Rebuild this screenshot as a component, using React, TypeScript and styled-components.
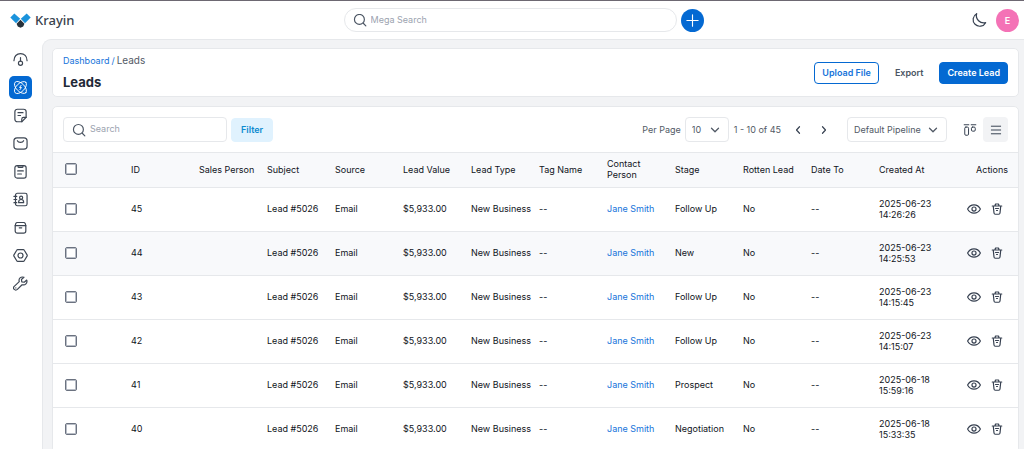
import React from "react";
import styled, { createGlobalStyle } from "styled-components";

const c = {
  blue: "#0469d2",
  link: "#1674da",
  text: "#1f2937",
  muted: "#525a66",
  line: "#e6e8eb",
  bg: "#f2f3f5",
  row: "#f8f9fb",
};

const GlobalStyle = createGlobalStyle`
  *, *::before, *::after { box-sizing: border-box; }
  body {
    margin: 0;
    background: #fff;
    color: ${c.text};
    font: 400 9px/11px Inter, "Liberation Sans", sans-serif;
  }
  button, input, select { font: inherit; color: inherit; margin: 0; }
  button { cursor: pointer; }
  a { color: ${c.link}; text-decoration: none; }
`;

const Page = styled.div`
  display: flex;
  flex-direction: column;
  height: 100vh;
  overflow: hidden;
  border-top: 1px solid #6d6872;
`;

const Header = styled.header`
  display: grid;
  grid-template-columns: 1fr minmax(200px, 360px) 1fr;
  align-items: center;
  flex: none;
  height: 38px;
  padding: 0 5px 0 28px;
`;

const Brand = styled.a`
  display: flex;
  align-items: center;
  gap: 4px;
  margin-left: -18px;
  color: #39434d;
  font: 500 13px/18px "Noto Sans", "Open Sans", sans-serif;
`;

const SearchGroup = styled.div`
  display: flex;
  align-items: center;
  gap: 4px;
`;

const SearchField = styled.label<{ $round?: boolean }>`
  display: flex;
  align-items: center;
  gap: 4px;
  flex: ${(p) => (p.$round ? "1" : "0 0 164px")};
  min-width: 0;
  height: ${(p) => (p.$round ? 24 : 25)}px;
  padding: 0 8px;
  border: 1px solid ${c.line};
  border-radius: ${(p) => (p.$round ? 12 : 4)}px;
  background: #fff;
  color: #4b5563;
`;

const SearchInput = styled.input`
  flex: 1;
  width: 0;
  min-width: 0;
  height: 14px;
  padding: 0 0 2px;
  border: 0;
  outline: 0;
  background: transparent;
  &::placeholder { color: #9ca3af; opacity: 1; }
`;

const RoundButton = styled.button<{ $pink?: boolean }>`
  display: grid;
  place-items: center;
  flex: none;
  width: 23px;
  height: 23px;
  padding: 0;
  border: 0;
  border-radius: 50%;
  background: ${(p) => (p.$pink ? "#f472b6" : c.blue)};
  color: #fff;
  font-weight: 600;
`;

const HeaderTools = styled.div`
  display: flex;
  align-items: center;
  justify-content: flex-end;
  gap: 9px;
`;

const IconButton = styled.button<{ $active?: boolean; $size?: number }>`
  display: grid;
  place-items: center;
  flex: none;
  width: ${(p) => p.$size ?? 16}px;
  height: ${(p) => p.$size ?? 16}px;
  padding: 0;
  border: 0;
  border-radius: 4px;
  background: ${(p) => (p.$active ? "#f2f3f5" : "transparent")};
  color: #374151;
`;

const Body = styled.div`
  display: flex;
  flex: 1;
  min-height: 0;
`;

const Sidebar = styled.nav`
  display: flex;
  flex-direction: column;
  gap: 5px;
  flex: none;
  width: 42px;
  padding: 9px 0 0 9px;
`;

const NavItem = styled.a<{ $active?: boolean }>`
  display: grid;
  place-items: center;
  width: 23px;
  height: 23px;
  border-radius: 5px;
  background: ${(p) => (p.$active ? c.blue : "transparent")};
  color: ${(p) => (p.$active ? "#fff" : "#3d4653")};
`;

const Main = styled.main`
  display: flex;
  flex-direction: column;
  gap: 9px;
  flex: 1;
  min-width: 0;
  padding: 8px 5px 0 9px;
  overflow: hidden;
  border: solid ${c.line};
  border-width: 1px 0 0 1px;
  border-top-left-radius: 9px;
  background: ${c.bg};
`;

const Panel = styled.section`
  flex: none;
  border: 1px solid ${c.line};
  border-radius: 5px;
  background: #fff;
  overflow: hidden;
`;

const TitleBar = styled.div`
  display: flex;
  align-items: center;
  justify-content: space-between;
  height: 47px;
  padding: 0 10px;
`;

const Crumbs = styled.div`
  display: flex;
  align-items: baseline;
  gap: 2px;
  color: ${c.link};
`;

const Current = styled.span`
  color: ${c.muted};
  font-size: 10px;
`;

const Title = styled.h1`
  margin: 8px 0 0;
  font-size: 13px;
  line-height: 16px;
  font-weight: 700;
`;

const Actions = styled.div`
  display: flex;
  align-items: center;
  gap: 8px;
`;

const Button = styled.button<{ $kind: "outline" | "plain" | "solid" | "soft" }>`
  height: ${(p) => (p.$kind === "soft" ? 24 : 22)}px;
  padding: 0 ${(p) => (p.$kind === "soft" ? 9 : 7)}px;
  border: 1px solid ${(p) =>
    ({ outline: c.blue, plain: "transparent", solid: c.blue, soft: "#e0f2fe" })[p.$kind]};
  border-radius: 4px;
  background: ${(p) =>
    ({ outline: "#fff", plain: "transparent", solid: c.blue, soft: "#e0f2fe" })[p.$kind]};
  color: ${(p) =>
    ({ outline: c.link, plain: "#4b5563", solid: "#fff", soft: "#0e8bd0" })[p.$kind]};
  font-weight: 600;
  white-space: nowrap;
`;

const Toolbar = styled.div`
  display: flex;
  align-items: center;
  justify-content: space-between;
  height: 45px;
  padding: 0 10px;
  color: ${c.muted};
`;

const PageControls = styled.div`
  display: flex;
  align-items: center;
  gap: 5px;
`;

const PerPage = styled.label`
  display: flex;
  align-items: center;
  gap: 4px;
`;

const Pager = styled.div`
  display: flex;
  gap: 10px;
  margin: 0 10px 0 4px;
`;

const ViewSwitch = styled.div`
  display: flex;
  align-items: center;
  gap: 1px;
  margin-left: 5px;
`;

const SelectBox = styled.span<{ $width: number }>`
  display: grid;
  align-items: center;
  width: ${(p) => p.$width}px;
  > * { grid-area: 1 / 1; }
  > svg { justify-self: end; margin-right: 8px; pointer-events: none; }
`;

const Select = styled.select`
  appearance: none;
  width: 100%;
  height: 25px;
  padding: 0 20px 0 6px;
  border: 1px solid ${c.line};
  border-radius: 4px;
  background: #fff;
`;

const Table = styled.table`
  width: 100%;
  table-layout: fixed;
  border-collapse: collapse;
  color: #10141b;
`;

const Col = styled.col<{ $width?: number }>`
  width: ${(p) => (p.$width ? `${p.$width}px` : "auto")};
`;

const Row = styled.tr<{ $head?: boolean; $shade?: boolean }>`
  height: ${(p) => (p.$head ? 35 : 44)}px;
  border: solid ${c.line};
  border-width: ${(p) => (p.$head ? "1px 0" : "0 0 1px")};
  background: ${(p) => (p.$head || p.$shade ? c.row : "#fff")};
`;

const cell = `
  padding: 0 6px 2px 0;
  font-weight: 400;
  text-align: left;
  vertical-align: middle;
  &:first-child { padding-left: 12px; }
  &:last-child { padding-right: 10px; text-align: right; }
`;
const Th = styled.th`${cell}`;
const Td = styled.td`${cell}`;

const Check = styled.input`
  appearance: none;
  display: block;
  width: 12px;
  height: 12px;
  border: 1px solid #6b7280;
  border-radius: 2px;
  background: #fff;
  box-shadow: inset 0 0 0 1px #b9bec7;
`;

const RowTools = styled.div`
  display: flex;
  justify-content: flex-end;
  gap: 7px;
  margin-right: 3px;
`;

function Icon({ size = 16, width = 1.7, children }: { size?: number; width?: number; children: React.ReactNode }) {
  return (
    <svg width={size} height={size} viewBox="0 0 24 24" fill="none" stroke="currentColor"
      strokeWidth={width} strokeLinecap="round" strokeLinejoin="round" aria-hidden="true">
      {children}
    </svg>
  );
}

const SearchIcon = () => (
  <Icon size={14} width={2}><circle cx="11" cy="11" r="8.5" /><path d="M18 18l4 4" /></Icon>
);
const ChevronDown = () => <Icon size={12} width={2.6}><path d="M5 8.500l7 7 7-7" /></Icon>;

const navItems: { label: string; icon: React.ReactNode }[] = [
  { label: "Dashboard", icon: <><path d="M1.500 14C1.500 7 6 2.500 12 2.500S22.500 7 22.500 14" /><path d="M12 9v5.500" /><circle cx="12" cy="18" r="3.300" /></> },
  {
    label: "Leads",
    icon: (
      <>
        <ellipse cx="12" cy="12" rx="12" ry="6.500" transform="rotate(45 12 12)" />
        <ellipse cx="12" cy="12" rx="12" ry="6.500" transform="rotate(-45 12 12)" />
        <path d="M13 8.500L10.500 12h3L11 15.500" />
      </>
    ),
  },
  { label: "Quotes", icon: <><path d="M14 22H7a4 4 0 0 1-4-4V6a4 4 0 0 1 4-4h10a4 4 0 0 1 4 4v9l-7 7z" /><path d="M14 22v-4a3 3 0 0 1 3-3h4M8 7.500h8M8 12h4" /></> },
  { label: "Mail", icon: <><rect x="1.500" y="3" width="21" height="18" rx="5" /><path d="M7 7.500c1.500 3.500 8.500 3.500 10 0" /></> },
  { label: "Activities", icon: <><rect x="3" y="2.500" width="18" height="20" rx="3.500" /><path d="M8 2.500v1.500q0 1.500 1.500 1.500h5q1.500 0 1.500-1.500V2.500zM7.500 11h9M7.500 16h6" /></> },
  { label: "Contacts", icon: <><rect x="4" y="2" width="18.500" height="20" rx="3" /><circle cx="13" cy="9" r="2.500" /><path d="M9 17v-1a4 4 0 0 1 8 0v1zM1.500 7H6M1.500 12H6M1.500 17H6" /></> },
  { label: "Products", icon: <><path d="M3.500 9h17v8.500a3.500 3.500 0 0 1-3.500 3.500H7a3.500 3.500 0 0 1-3.500-3.500z" /><path d="M3.500 9l1-3.500A2.500 2.500 0 0 1 7 4h10a2.500 2.500 0 0 1 2.500 1.500l1 3.500M10 12.500h4" /></> },
  { label: "Settings", icon: <><path d="M7.500 2.500h9q1 0 1.500 1l4.500 7.500q.6 1 0 2L18 20.500q-.5 1-1.500 1h-9q-1 0-1.500-1L1.500 13q-.6-1 0-2L6 3.500q.5-1 1.500-1z" /><circle cx="12" cy="12" r="4" /></> },
  { label: "Configuration", icon: <path d="M22 6.500l-4 3.500-4-.5-.5-4 4-3.500c-5-1.500-9 2-7.500 7L2 16.500a3.500 3.500 0 0 0 5 5l7.500-7.500c5 1.500 9-2.500 7.500-7.500zM4.500 19h.1" /> },
];

const columns = ["ID", "Sales Person", "Subject", "Source", "Lead Value", "Lead Type", "Tag Name",
  "Contact Person", "Stage", "Rotten Lead", "Date To", "Created At"];

const leads = [
  { id: 45, stage: "Follow Up", created: "2025-06-23 14:26:26" },
  { id: 44, stage: "New", created: "2025-06-23 14:25:53" },
  { id: 43, stage: "Follow Up", created: "2025-06-23 14:15:45" },
  { id: 42, stage: "Follow Up", created: "2025-06-23 14:15:07" },
  { id: 41, stage: "Prospect", created: "2025-06-18 15:59:16" },
  { id: 40, stage: "Negotiation", created: "2025-06-18 15:33:35" },
];

export default function App() {
  return (
    <Page>
      <GlobalStyle />
      <Header>
        <Brand href="#">
          <svg width="21" height="15" viewBox="0 0 21 15" aria-hidden="true">
            <path d="M.3 4.500L4.300.4l5.900 5.400-4.200 4.400z" fill="#1b93dc" />
            <path d="M20.700 4.500L16.700.4l-5.900 5.400 4.200 4.400z" fill="#1b93dc" />
            <path d="M10.500 6.800l3.900 3.900-1.200 2.700-2.700 1.400-2.700-1.400-1.200-2.700z" fill="#27323b" />
          </svg>
          Krayin
        </Brand>
        <SearchGroup>
          <SearchField $round>
            <SearchIcon />
            <SearchInput placeholder="Mega Search" aria-label="Mega Search" />
          </SearchField>
          <RoundButton aria-label="Quick create"><Icon size={15} width={1.8}><path d="M12 3v18M3 12h18" /></Icon></RoundButton>
        </SearchGroup>
        <HeaderTools>
          <IconButton aria-label="Dark mode">
            <Icon width={1.8}><path d="M8.500 2.500A10 10 0 1 0 22 16 11 11 0 0 1 8.500 2.500z" /></Icon>
          </IconButton>
          <RoundButton $pink>E</RoundButton>
        </HeaderTools>
      </Header>
      <Body>
        <Sidebar>
          {navItems.map((item) => (
            <NavItem key={item.label} href="#" aria-label={item.label} $active={item.label === "Leads"}>
              <Icon size={15} width={item.label === "Leads" ? 1.5 : 1.9}>{item.icon}</Icon>
            </NavItem>
          ))}
        </Sidebar>
        <Main>
          <Panel>
            <TitleBar>
              <div>
                <Crumbs><a href="#">Dashboard</a><span>/</span><Current>Leads</Current></Crumbs>
                <Title>Leads</Title>
              </div>
              <Actions>
                <Button $kind="outline">Upload File</Button>
                <Button $kind="plain">Export</Button>
                <Button $kind="solid">Create Lead</Button>
              </Actions>
            </TitleBar>
          </Panel>
          <Panel>
            <Toolbar>
              <SearchGroup>
                <SearchField>
                  <SearchIcon />
                  <SearchInput placeholder="Search" aria-label="Search" />
                </SearchField>
                <Button $kind="soft">Filter</Button>
              </SearchGroup>
              <PageControls>
                <PerPage>
                  Per Page
                  <SelectBox $width={44}>
                    <Select defaultValue="10"><option>10</option><option>20</option></Select>
                    <ChevronDown />
                  </SelectBox>
                </PerPage>
                <span>1 - 10 of 45</span>
                <Pager>
                  <IconButton aria-label="Previous page"><Icon size={12} width={2.4}><path d="M15 5.500L9 12l6 6.500" /></Icon></IconButton>
                  <IconButton aria-label="Next page"><Icon size={12} width={2.4}><path d="M9 5.500l6 6.500-6 6.500" /></Icon></IconButton>
                </Pager>
                <SelectBox $width={100}>
                  <Select aria-label="Pipeline"><option>Default Pipeline</option></Select>
                  <ChevronDown />
                </SelectBox>
                <ViewSwitch>
                  <IconButton $size={25} aria-label="Board view">
                    <Icon size={14}><path d="M2 3h8M14 3h8" /><rect x="3" y="7" width="6.500" height="14" rx="2" /><rect x="14.500" y="7" width="6.500" height="7" rx="2" /></Icon>
                  </IconButton>
                  <IconButton $size={25} $active aria-label="List view">
                    <Icon size={14}><path d="M4 5.500h16M4 12h16M4 18.500h16" /></Icon>
                  </IconButton>
                </ViewSwitch>
              </PageControls>
            </Toolbar>
            <Table>
              <colgroup>
                <Col $width={78} />
                {columns.map((name) => <Col key={name} />)}
                <Col $width={71} />
              </colgroup>
              <thead>
                <Row $head>
                  <Th><Check type="checkbox" aria-label="Select all" /></Th>
                  {columns.map((name) => <Th key={name}>{name}</Th>)}
                  <Th>Actions</Th>
                </Row>
              </thead>
              <tbody>
                {leads.map((lead) => (
                  <Row key={lead.id} $shade={lead.id === 44}>
                    <Td><Check type="checkbox" aria-label={`Select lead ${lead.id}`} /></Td>
                    <Td>{lead.id}</Td>
                    <Td />
                    <Td>Lead #5026</Td>
                    <Td>Email</Td>
                    <Td>$5,933.00</Td>
                    <Td>New Business</Td>
                    <Td>--</Td>
                    <Td><a href="#">Jane Smith</a></Td>
                    <Td>{lead.stage}</Td>
                    <Td>No</Td>
                    <Td>--</Td>
                    <Td>{lead.created}</Td>
                    <Td>
                      <RowTools>
                        <IconButton aria-label="View">
                          <Icon size={14} width={2}><path d="M1 12c5-9.500 17-9.500 22 0-5 9.500-17 9.500-22 0z" /><circle cx="12" cy="12" r="3.500" /></Icon>
                        </IconButton>
                        <IconButton aria-label="Delete">
                          <Icon size={12} width={2.4}><path d="M2.500 6h19M8 5.500L9 2h6l1 3.500M4.500 6l1.500 14q.3 2.500 2.500 2.500h7q2.200 0 2.500-2.500l1.500-14M9 11h6M11 15h2" /></Icon>
                        </IconButton>
                      </RowTools>
                    </Td>
                  </Row>
                ))}
              </tbody>
            </Table>
          </Panel>
        </Main>
      </Body>
    </Page>
  );
}
